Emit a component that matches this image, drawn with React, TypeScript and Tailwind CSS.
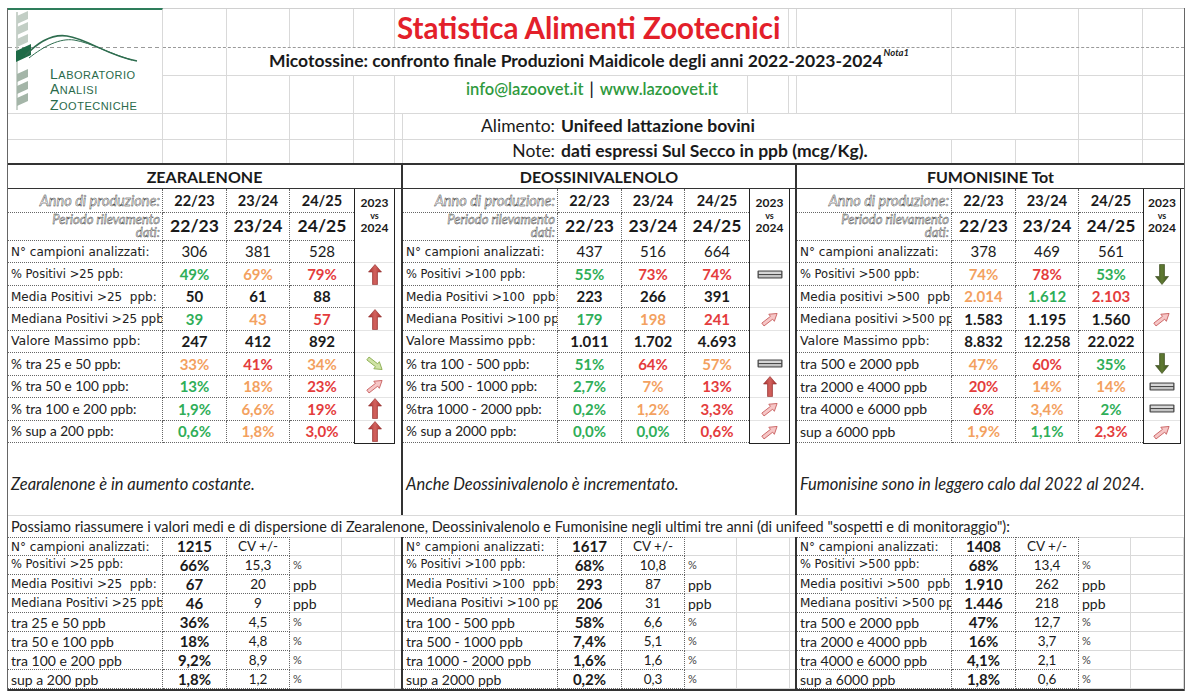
import React from "react"

/* =======================
   Fonts / tones
======================= */

const V11 = "font-['DejaVu_Sans',sans-serif] text-[11.5px]"
const V12 = "font-['DejaVu_Sans',sans-serif] text-[12px]"
const V13 = "font-['DejaVu_Sans',sans-serif] text-[12.5px]"
const C14 = "text-[13.6px]"
const C15 = "text-[14px]"

type Tone = "g" | "o" | "r" | "b" | "n"
type Arrow = "up" | "down" | "eq" | "du" | "dd" | null

const tone: Record<Tone, string> = {
  g: "font-bold text-[#2fae58]",
  o: "font-bold text-[#f3a15f]",
  r: "font-bold text-[#e43c3c]",
  b: "font-bold text-[#1a1a1a]",
  n: "text-[#1a1a1a]",
}

type Row = { l: string; f: string; v: [string, Tone][]; a: Arrow }
type SumRow = [string, string, string, string, string]

type Sec = {
  title: string
  w: string
  arrowW: string
  rows: Row[]
  note: string
  sum: SumRow[]
}

const sections: Sec[] = [
  {
    title: "ZEARALENONE",
    w: "w-[395px] border-r-2 border-[#333]",
    arrowW: "w-[41px]",
    rows: [
      { l: "N° campioni analizzati:", f: V12, v: [["306", "n"], ["381", "n"], ["528", "n"]], a: null },
      { l: "% Positivi >25 ppb:", f: V11, v: [["49%", "g"], ["69%", "o"], ["79%", "r"]], a: "up" },
      { l: "Media Positivi >25  ppb:", f: V12, v: [["50", "b"], ["61", "b"], ["88", "b"]], a: null },
      { l: "Mediana Positivi >25 ppb", f: V12, v: [["39", "g"], ["43", "o"], ["57", "r"]], a: "up" },
      { l: "Valore Massimo ppb:", f: V13, v: [["247", "b"], ["412", "b"], ["892", "b"]], a: null },
      { l: "% tra 25 e 50 ppb:", f: C14, v: [["33%", "o"], ["41%", "r"], ["34%", "o"]], a: "dd" },
      { l: "% tra 50 e 100 ppb:", f: C14, v: [["13%", "g"], ["18%", "o"], ["23%", "r"]], a: "du" },
      { l: "% tra 100 e 200 ppb:", f: C14, v: [["1,9%", "g"], ["6,6%", "o"], ["19%", "r"]], a: "up" },
      { l: "% sup a 200 ppb:", f: C14, v: [["0,6%", "g"], ["1,8%", "o"], ["3,0%", "r"]], a: "up" },
    ],
    note: "Zearalenone è in aumento costante.",
    sum: [
      ["N° campioni analizzati:", V12, "1215", "CV +/-", ""],
      ["% Positivi >25 ppb:", V11, "66%", "15,3", "%"],
      ["Media Positivi >25  ppb:", V12, "67", "20", "ppb"],
      ["Mediana Positivi >25 ppb", V12, "46", "9", "ppb"],
      ["tra 25 e 50 ppb", C15, "36%", "4,5", "%"],
      ["tra 50 e 100 ppb", C15, "18%", "4,8", "%"],
      ["tra 100 e 200 ppb", C15, "9,2%", "8,9", "%"],
      ["sup a 200 ppb", C15, "1,8%", "1,2", "%"],
    ],
  },
  {
    title: "DEOSSINIVALENOLO",
    w: "w-[394px] border-r-2 border-[#333]",
    arrowW: "w-[41px]",
    rows: [
      { l: "N° campioni analizzati:", f: V12, v: [["437", "n"], ["516", "n"], ["664", "n"]], a: null },
      { l: "% Positivi >100 ppb:", f: V11, v: [["55%", "g"], ["73%", "r"], ["74%", "r"]], a: "eq" },
      { l: "Media Positivi >100  ppb:", f: V12, v: [["223", "b"], ["266", "b"], ["391", "b"]], a: null },
      { l: "Mediana Positivi >100 ppb", f: V12, v: [["179", "g"], ["198", "o"], ["241", "r"]], a: "du" },
      { l: "Valore Massimo ppb:", f: V13, v: [["1.011", "b"], ["1.702", "b"], ["4.693", "b"]], a: null },
      { l: "% tra 100 - 500 ppb:", f: C14, v: [["51%", "g"], ["64%", "r"], ["57%", "o"]], a: "eq" },
      { l: "% tra 500 - 1000 ppb:", f: C14, v: [["2,7%", "g"], ["7%", "o"], ["13%", "r"]], a: "up" },
      { l: "%tra 1000 - 2000 ppb:", f: C14, v: [["0,2%", "g"], ["1,2%", "o"], ["3,3%", "r"]], a: "du" },
      { l: "% sup a 2000 ppb:", f: C14, v: [["0,0%", "g"], ["0,0%", "g"], ["0,6%", "r"]], a: "du" },
    ],
    note: "Anche Deossinivalenolo è incrementato.",
    sum: [
      ["N° campioni analizzati:", V12, "1617", "CV +/-", ""],
      ["% Positivi >100 ppb:", V11, "68%", "10,8", "%"],
      ["Media Positivi >100  ppb:", V12, "293", "87", "ppb"],
      ["Mediana Positivi >100 ppb", V12, "206", "31", "ppb"],
      ["tra 100 - 500 ppb", C15, "58%", "6,6", "%"],
      ["tra 500 - 1000 ppb", C15, "7,4%", "5,1", "%"],
      ["tra 1000 - 2000 ppb", C15, "1,6%", "1,6", "%"],
      ["sup a 2000 ppb", C15, "0,2%", "0,3", "%"],
    ],
  },
  {
    title: "FUMONISINE Tot",
    w: "w-[387px]",
    arrowW: "w-[38px]",
    rows: [
      { l: "N° campioni analizzati:", f: V12, v: [["378", "n"], ["469", "n"], ["561", "n"]], a: null },
      { l: "% Positivi >500 ppb:", f: V11, v: [["74%", "o"], ["78%", "r"], ["53%", "g"]], a: "down" },
      { l: "Media positivi >500  ppb:", f: V12, v: [["2.014", "o"], ["1.612", "g"], ["2.103", "r"]], a: null },
      { l: "Mediana positivi >500 ppb", f: V12, v: [["1.583", "b"], ["1.195", "b"], ["1.560", "b"]], a: "du" },
      { l: "Valore Massimo ppb:", f: V13, v: [["8.832", "b"], ["12.258", "b"], ["22.022", "b"]], a: null },
      { l: "tra 500 e 2000 ppb", f: C15, v: [["47%", "o"], ["60%", "r"], ["35%", "g"]], a: "down" },
      { l: "tra 2000 e 4000 ppb", f: C15, v: [["20%", "r"], ["14%", "o"], ["14%", "o"]], a: "eq" },
      { l: "tra 4000 e 6000 ppb", f: C15, v: [["6%", "r"], ["3,4%", "o"], ["2%", "g"]], a: "eq" },
      { l: "sup a 6000 ppb", f: C15, v: [["1,9%", "o"], ["1,1%", "g"], ["2,3%", "r"]], a: "du" },
    ],
    note: "Fumonisine sono in leggero calo dal 2022 al 2024.",
    sum: [
      ["N° campioni analizzati:", V12, "1408", "CV +/-", ""],
      ["% Positivi >500 ppb:", V11, "68%", "13,4", "%"],
      ["Media positivi >500  ppb:", V12, "1.910", "262", "ppb"],
      ["Mediana positivi >500 ppb", V12, "1.446", "218", "ppb"],
      ["tra 500 e 2000 ppb", C15, "47%", "12,7", "%"],
      ["tra 2000 e 4000 ppb", C15, "16%", "3,7", "%"],
      ["tra 4000 e 6000 ppb", C15, "4,1%", "2,1", "%"],
      ["sup a 6000 ppb", C15, "1,8%", "0,6", "%"],
    ],
  },
]

const VW = ["w-[64px]", "w-[63px]", "w-[64px]"]
const DOT = "border-dotted border-[#666]"
const GRID = "border-r border-b border-[#d9d9d9]"
const HOLLOW = "italic text-white [-webkit-text-stroke:0.4px_#1a1a1a]"

/* =======================
   Icons
======================= */

function UpArrow() {
  return (
    <svg width="14" height="21" viewBox="0 0 14 21">
      <defs>
        <linearGradient id="upred" x1="0" x2="1" y1="0" y2="0">
          <stop offset="0" stopColor="#a8322f" />
          <stop offset="0.5" stopColor="#d2625e" />
          <stop offset="1" stopColor="#a8322f" />
        </linearGradient>
      </defs>
      <polygon points="7,0.5 13.5,8 9.5,8 9.5,20.5 4.5,20.5 4.5,8 0.5,8" fill="url(#upred)" stroke="#8e2a28" strokeWidth="0.6" />
    </svg>
  )
}

function DownArrow() {
  return (
    <svg width="14" height="21" viewBox="0 0 14 21">
      <defs>
        <linearGradient id="dngreen" x1="0" x2="1" y1="0" y2="0">
          <stop offset="0" stopColor="#3e531d" />
          <stop offset="0.5" stopColor="#5f7a32" />
          <stop offset="1" stopColor="#3e531d" />
        </linearGradient>
      </defs>
      <polygon points="4.5,0.5 9.5,0.5 9.5,12.5 13.5,12.5 7,20.5 0.5,12.5 4.5,12.5" fill="url(#dngreen)" stroke="#35461a" strokeWidth="0.6" />
    </svg>
  )
}

function DiagArrow({ up }: { up: boolean }) {
  return (
    <svg width="22" height="18" viewBox="0 0 22 18">
      <g transform={`rotate(${up ? -38 : 38} 11 9)`}>
        <polygon
          points="2,7.2 13,7.2 13,4.5 20,9 13,13.5 13,10.8 2,10.8"
          fill={up ? "#f6c6c6" : "#cfe3a6"}
          stroke={up ? "#c65a5a" : "#86a94a"}
          strokeWidth="0.8"
        />
      </g>
    </svg>
  )
}

function Equal() {
  return (
    <svg width="26" height="9" viewBox="0 0 26 9">
      <rect x="0.5" y="0.5" width="25" height="8" rx="1" fill="#4a4a4a" />
      <rect x="1.8" y="1.6" width="22.4" height="2.4" fill="#d6d6d6" />
      <rect x="1.8" y="5" width="22.4" height="2.4" fill="#c4c4c4" />
    </svg>
  )
}

function ArrowIcon({ a }: { a: Arrow }) {
  if (a === "up") return <UpArrow />
  if (a === "down") return <DownArrow />
  if (a === "eq") return <Equal />
  if (a === "du") return <DiagArrow up />
  if (a === "dd") return <DiagArrow up={false} />
  return null
}

function Logo() {
  const leaves = [4, 15, 27, 62, 74, 86]
  return (
    <svg width="154" height="103" viewBox="0 0 154 103">
      <line x1="0" y1="37.5" x2="154" y2="37.5" stroke="#9a9a9a" strokeDasharray="4 3" />
      <line x1="9" y1="2" x2="9" y2="100" stroke="#b8c4bb" strokeWidth="1.5" />
      {leaves.map((y, i) => (
        <polygon
          key={y}
          points={`9,${y + 10} 9,${y + 2} 20,${y - 3} 20,${y + 5}`}
          fill={i < 3 ? "#c2cec5" : "#a4b5a8"}
        />
      ))}
      <polygon points="8,52 8,41 23,34 23,45" fill="#1e6b47" />
      <path d="M17 46 C 30 32, 45 24, 59 26 C 80 29, 100 46, 129 51" fill="none" stroke="#2e6d4f" strokeWidth="1.6" />
      <path d="M21 48 C 36 36, 52 28, 66 30 C 84 33, 102 44, 124 50" fill="none" stroke="#2e6d4f" strokeWidth="1" />
      <g fill="#2a6a4a" fontFamily="'Liberation Sans', sans-serif" letterSpacing="0.5">
        <text x="42" y="69">
          <tspan fontSize="14">L</tspan>
          <tspan fontSize="11">ABORATORIO</tspan>
        </text>
        <text x="42" y="84">
          <tspan fontSize="14">A</tspan>
          <tspan fontSize="11">NALISI</tspan>
        </text>
        <text x="42" y="100">
          <tspan fontSize="14">Z</tspan>
          <tspan fontSize="11">OOTECNICHE</tspan>
        </text>
      </g>
    </svg>
  )
}

/* =======================
   Pieces
======================= */

function Blank({ w, cls = GRID }: { w: string; cls?: string }) {
  return <div className={`${w} h-full shrink-0 ${cls}`} />
}

function StatTable({ s }: { s: Sec }) {
  return (
    <div className={`${s.w} h-full flex flex-col shrink-0`}>
      <div className="h-[24px] flex items-center justify-center border-b border-[#333] text-[16px] font-bold">
        {s.title}
      </div>
      <div className="flex">
        <div className="w-[346px] shrink-0">
          <div className="flex h-[24px]">
            <div className={`w-[155px] shrink-0 border-r border-b ${DOT} flex items-center justify-end pr-[2px] text-[14.5px] ${HOLLOW}`}>
              Anno di produzione:
            </div>
            {["22/23", "23/24", "24/25"].map((y, i) => (
              <div key={y} className={`${VW[i]} shrink-0 border-b ${i < 2 ? "border-r" : ""} ${DOT} flex items-center justify-center text-[14.5px] font-bold`}>
                {y}
              </div>
            ))}
          </div>
          <div className="flex h-[28px]">
            <div className={`w-[155px] shrink-0 border-r border-b ${DOT} text-right pr-[2px] text-[13px] leading-[12.5px] ${HOLLOW}`}>
              Periodo rilevamento
              <br />
              dati:
            </div>
            {["22/23", "23/24", "24/25"].map((y, i) => (
              <div key={y} className={`${VW[i]} shrink-0 border-b ${i < 2 ? "border-r" : ""} ${DOT} flex items-center justify-center text-[17.5px] font-bold`}>
                {y}
              </div>
            ))}
          </div>
          {s.rows.map((r) => (
            <div key={r.l} className="flex h-[22.45px]">
              <div className={`w-[155px] shrink-0 border-r border-b ${DOT} pl-[3px] flex items-center overflow-hidden whitespace-pre text-[#222] ${r.f}`}>
                {r.l}
              </div>
              {r.v.map(([val, t], i) => (
                <div key={i} className={`${VW[i]} shrink-0 border-b ${i < 2 ? "border-r" : ""} ${DOT} flex items-center justify-center text-[15px] ${tone[t]}`}>
                  {val}
                </div>
              ))}
            </div>
          ))}
        </div>
        <div className={`${s.arrowW} shrink-0 border-x-[1.5px] border-b-[1.5px] border-[#222] flex flex-col`}>
          <div className="h-[52px] flex flex-col items-center justify-center font-bold leading-none">
            <span className="text-[12px]">2023</span>
            <span className="text-[9px] my-[2px]">vs</span>
            <span className="text-[12px]">2024</span>
          </div>
          {s.rows.map((r, i) => (
            <div key={r.l} className={`h-[22.45px] flex items-center justify-center ${i < 8 ? "border-b border-[#e4e4e4]" : ""}`}>
              <ArrowIcon a={r.a} />
            </div>
          ))}
        </div>
        <div className="flex-1" />
      </div>
      <div className="flex-1 pl-[3px] pt-[28px] italic text-[16.5px] text-[#222] whitespace-nowrap">{s.note}</div>
    </div>
  )
}

function SumTable({ s }: { s: Sec }) {
  return (
    <div className={`${s.w} h-full flex flex-col shrink-0`}>
      {s.sum.map(([l, f, v, cv, u], i) => (
        <div key={l} className="flex h-[19px]">
          <div className={`w-[155px] shrink-0 border-r border-b ${i === 0 ? "border-t" : ""} ${DOT} pl-[3px] flex items-center overflow-hidden whitespace-pre text-[#222] ${f}`}>
            {l}
          </div>
          <div className={`w-[64px] shrink-0 border-r border-b ${i === 0 ? "border-t" : ""} ${DOT} flex items-center justify-center text-[15px] font-bold`}>
            {v}
          </div>
          <div className={`w-[63px] shrink-0 border-r border-b ${i === 0 ? "border-t" : ""} ${DOT} flex items-center justify-center text-[13.5px]`}>
            {cv}
          </div>
          <div className={`w-[52px] shrink-0 ${GRID} ${i === 0 ? "border-t" : ""} pl-[3px] flex items-center ${u === "%" ? "text-[11px] text-[#444]" : "text-[14px]"}`}>
            {u}
          </div>
          <div className={`w-[53px] shrink-0 ${GRID} ${i === 0 ? "border-t" : ""}`} />
          <div className={`flex-1 border-b border-[#d9d9d9] ${i === 0 ? "border-t" : ""}`} />
        </div>
      ))}
    </div>
  )
}

/* =======================
   Page
======================= */

export default function App() {
  return (
    <div className="w-[1189px] h-[691px] overflow-hidden bg-white pl-[7px] pt-[8px] font-['Lato','Open_Sans',sans-serif] text-[#1a1a1a]">
      <div className="w-[1178px] border-x border-[#666]">
        {/* header */}
        <div className="flex h-[106px]">
          <div className="w-[155px] shrink-0 border-t-2 border-t-[#2e7d5b] border-r border-b border-[#d9d9d9]">
            <Logo />
          </div>
          <div className="flex-1 border-t border-[#d0d0d0] flex flex-col">
            <div className="flex h-[38px]">
              <Blank w="w-[64px]" cls="border-r border-[#d9d9d9]" />
              <Blank w="w-[63px]" cls="border-r border-[#d9d9d9]" />
              <Blank w="w-[64px]" cls="border-r border-[#d9d9d9]" />
              <Blank w="w-[41px]" cls="border-r border-[#d9d9d9]" />
              <div className="w-[394px] shrink-0 h-full border-r border-[#d9d9d9] pl-[2px] flex items-center whitespace-nowrap text-[29.5px] font-bold text-[#e3202a]">
                Statistica Alimenti Zootecnici
              </div>
              <Blank w="w-[8px]" cls="border-r border-[#d9d9d9]" />
              <Blank w="w-[155px]" cls="border-r border-[#d9d9d9]" />
              <Blank w="w-[64px]" cls="border-r border-[#d9d9d9]" />
              <Blank w="w-[63px]" cls="border-r border-[#d9d9d9]" />
              <Blank w="w-[64px]" cls="border-r border-[#d9d9d9]" />
              <Blank w="w-[41px]" cls="" />
            </div>
            <div className="h-px border-t border-dashed border-[#9a9a9a]" />
            <div className="flex h-[28px]">
              <Blank w="w-[64px]" />
              <div className="w-[725px] shrink-0 h-full border-r border-b border-[#d9d9d9] flex items-center justify-center whitespace-nowrap text-[17.5px] font-bold">
                Micotossine: confronto finale Produzioni Maidicole degli anni 2022-2023-2024
                <sup className="italic text-[9.5px] ml-[1px] -mt-[8px]">Nota1</sup>
              </div>
              <Blank w="w-[64px]" />
              <Blank w="w-[63px]" />
              <Blank w="w-[64px]" />
              <Blank w="w-[41px]" cls="border-b border-[#d9d9d9]" />
            </div>
            <div className="flex h-[38px]">
              <Blank w="w-[64px]" />
              <Blank w="w-[63px]" />
              <Blank w="w-[64px]" />
              <Blank w="w-[41px]" />
              <div className="w-[353px] shrink-0 h-full border-r border-b border-[#d9d9d9] pl-[71px] pt-[1px] whitespace-nowrap text-[16.5px] font-semibold">
                <span className="text-[#2f9a3e]">info@lazoovet.it</span>
                <span className="mx-[6px]">|</span>
                <span className="text-[#2f9a3e]">www.lazoovet.it</span>
              </div>
              <Blank w="w-[41px]" />
              <Blank w="w-[8px]" />
              <Blank w="w-[155px]" />
              <Blank w="w-[64px]" />
              <Blank w="w-[63px]" />
              <Blank w="w-[64px]" />
              <Blank w="w-[41px]" cls="border-b border-[#d9d9d9]" />
            </div>
          </div>
        </div>

        <div className="flex h-[26px]">
          <Blank w="w-[155px]" />
          <Blank w="w-[64px]" />
          <Blank w="w-[63px]" />
          <Blank w="w-[64px]" />
          <Blank w="w-[41px]" />
          <Blank w="w-[8px]" />
          <div className="w-[155px] shrink-0 h-full border-b border-[#d9d9d9] flex items-center justify-end pr-[3px] text-[17.5px]">
            Alimento:
          </div>
          <div className="w-[521px] shrink-0 h-full border-r border-b border-[#d9d9d9] flex items-center pl-[3px] text-[17.5px] font-bold">
            Unifeed lattazione bovini
          </div>
          <Blank w="w-[64px]" />
          <Blank w="w-[41px]" cls="border-b border-[#d9d9d9]" />
        </div>
        <div className="flex h-[23px]">
          <Blank w="w-[155px]" cls="border-r border-[#d9d9d9]" />
          <Blank w="w-[64px]" cls="border-r border-[#d9d9d9]" />
          <Blank w="w-[63px]" cls="border-r border-[#d9d9d9]" />
          <Blank w="w-[64px]" cls="border-r border-[#d9d9d9]" />
          <Blank w="w-[41px]" cls="border-r border-[#d9d9d9]" />
          <Blank w="w-[8px]" cls="border-r border-[#d9d9d9]" />
          <div className="w-[155px] shrink-0 h-full flex items-center justify-end pr-[3px] text-[17.5px]">Note:</div>
          <div className="w-[394px] shrink-0 h-full border-r border-[#d9d9d9] flex items-center pl-[3px] whitespace-nowrap text-[17.5px] font-bold">
            dati espressi Sul Secco in ppb (mcg/Kg).
          </div>
          <Blank w="w-[64px]" cls="border-r border-[#d9d9d9]" />
          <Blank w="w-[63px]" cls="border-r border-[#d9d9d9]" />
          <Blank w="w-[64px]" cls="border-r border-[#d9d9d9]" />
          <Blank w="w-[41px]" cls="" />
        </div>

        {/* statistics */}
        <div className="flex h-[352px] border-t-2 border-[#333]">
          {sections.map((s) => (
            <StatTable key={s.title} s={s} />
          ))}
        </div>

        <div className="h-[22px] border-t border-[#d9d9d9] pl-[3px] flex items-center whitespace-nowrap text-[14.5px] text-[#222]">
          Possiamo riassumere i valori medi e di dispersione di Zearalenone, Deossinivalenolo e Fumonisine negli ultimi tre anni (di unifeed "sospetti e di monitoraggio"):
        </div>

        {/* summary */}
        <div className="flex h-[154px] border-b-2 border-[#333]">
          {sections.map((s) => (
            <SumTable key={s.title} s={s} />
          ))}
        </div>
      </div>
    </div>
  )
}
